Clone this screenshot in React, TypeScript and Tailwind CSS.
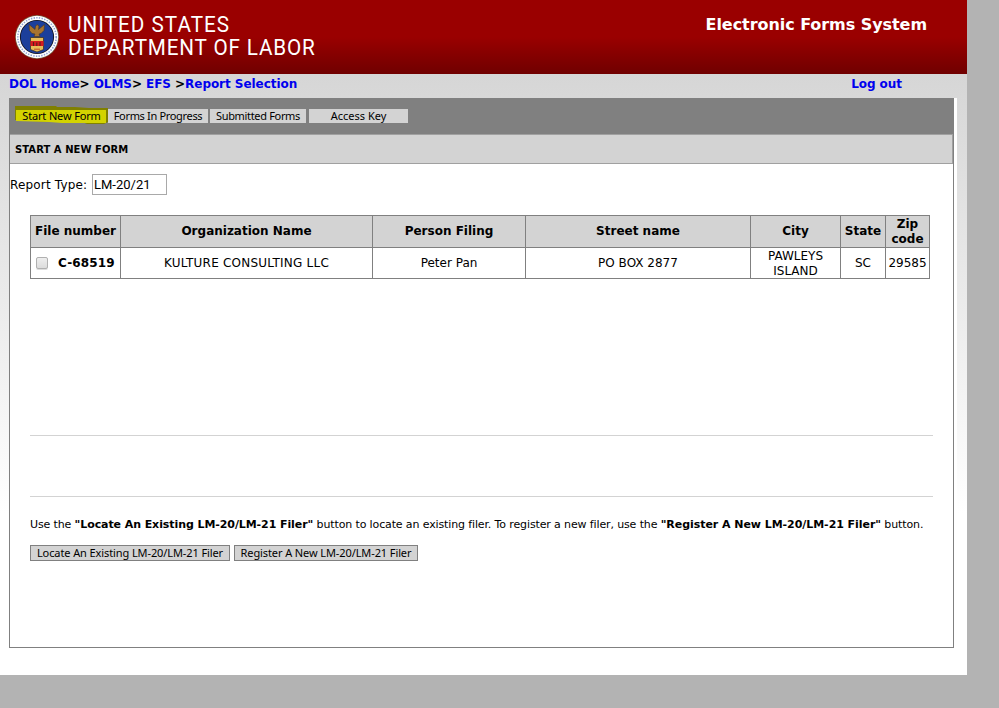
import type { ReactNode } from "react";

const th = "border border-[#808080] bg-[#d3d3d3] p-0 text-center font-bold leading-[15px]";
const td = "border border-[#808080] p-0 text-center leading-[15px]";

function Seal() {
  return (
    <svg width="44" height="44" viewBox="0 0 44 44">
      <circle cx="22" cy="22" r="22" fill="#73583c" />
      <circle cx="22" cy="22" r="21.2" fill="#fff" />
      <circle cx="22" cy="22" r="19.2" fill="none" stroke="#8fa3d2" strokeWidth="1.6" strokeDasharray="1.4 1.3" />
      <circle cx="22" cy="22" r="17.1" fill="#14141f" />
      <circle cx="22" cy="22" r="16.2" fill="#1c3f9b" />
      <path
        d="M14 9.5 L20 14.5 L20.5 11.5 L22 9.5 L24 11 L23.5 14.5 L29.5 9.5 L29 15.5 L26 18.5 L24 19 L25 21.5 L19 21.5 L20 19 L17 18.5 L14.5 15.5Z"
        fill="#a8742f"
        stroke="#4a3520"
        strokeWidth=".6"
      />
      <path d="M15.5 22.5 H28.5 V34.5 L22 37 L15.5 34.5Z" fill="#e8bd58" stroke="#33281c" strokeWidth=".7" />
      <path d="M15.5 26 H28.5 V31 H15.5Z" fill="#d71920" />
      <path d="M18.5 27 v4 M21.8 27.5 v3.5 M25 27 v4" stroke="#572018" strokeWidth="1.1" />
      <path d="M19 34.2 h6" stroke="#c44a27" strokeWidth="1" />
    </svg>
  );
}

function Tab({ children, className }: { children: ReactNode; className: string }) {
  return (
    <button className={`block h-[14px] whitespace-nowrap text-center leading-[14px] ${className}`}>{children}</button>
  );
}

export default function App() {
  return (
    <div className="h-[708px] w-[999px] overflow-hidden bg-[#b3b3b3] font-['DejaVu_Sans',sans-serif] text-black">
      <div className="h-[675px] w-[967px] bg-white">
        <header className="flex h-[74px] justify-between bg-linear-to-b from-[#9a0000] from-50% to-[#700000] pl-[15px] pr-[40px] text-white">
          <div className="flex pt-[15px]">
            <Seal />
            <div className="ml-[9px] -mt-[2px] origin-left scale-x-[0.94] whitespace-nowrap font-['Roboto',sans-serif] text-[22px] leading-[23px]">
              <div className="tracking-[1.1px]">UNITED STATES</div>
              <div className="tracking-[0.9px]">DEPARTMENT OF LABOR</div>
            </div>
          </div>
          <h1 className="whitespace-nowrap pt-[15px] text-[16px] font-bold leading-[20px] tracking-[-0.06px]">
            Electronic Forms System
          </h1>
        </header>
        <div className="h-[601px] bg-linear-to-b from-[#d6d6d6] to-white to-[440px] pl-[9px]">
          <nav className="flex h-[24px] justify-between whitespace-nowrap pr-[65px] text-[12px] font-bold leading-[20px] tracking-[-0.05px] text-[#0000ee]">
            <div>
              DOL Home<span className="text-black">&gt;</span> OLMS<span className="text-black">&gt;</span> EFS{" "}
              <span className="text-black">&gt;</span>Report Selection
            </div>
            <div>Log out</div>
          </nav>
          <div className="w-[948px] bg-white">
            <main className="h-[550px] w-[945px] border border-[#808080] bg-white">
              <div className="flex h-[35px] bg-[#808080] pl-[6px] pt-[10px] font-['Noto_Sans',sans-serif] text-[11px]">
                <div className="relative h-[14px] w-[92px]">
                  <svg className="absolute -left-px -top-[4px]" width="93" height="20">
                    <path d="M0 1H41L42 2H60L74 3H93V17L89 19H72L67 17H35L0 15Z" fill="#808000" />
                    <path d="M1 5H91V18H47L34 17L1 16Z" fill="#d3d300" />
                  </svg>
                  <Tab className="relative w-[91px] tracking-[-0.15px]">Start New Form</Tab>
                </div>
                <Tab className="w-[100px] bg-[#d3d3d3] tracking-[-0.33px]">Forms In Progress</Tab>
                <Tab className="ml-[2px] w-[96px] bg-[#d3d3d3] tracking-[-0.33px]">Submitted Forms</Tab>
                <Tab className="ml-[3px] w-[99px] bg-[#d3d3d3]">Access Key</Tab>
              </div>
              <h2 className="h-[30px] w-[943px] border border-l-0 border-[#a0a0a0] bg-[#d3d3d3] pl-[5px] text-[10px] font-bold leading-[30px] tracking-[0.05px]">
                START A NEW FORM
              </h2>
              <div className="flex h-[51px] items-start pt-[10px]">
                <label className="w-[82px] whitespace-nowrap text-[12px] leading-[22px] tracking-[0.17px]">
                  Report Type:
                </label>
                <div className="h-[21px] w-[75px] border border-[#a9a9a9] pl-px font-['Roboto',sans-serif] text-[13px] leading-[19px]">
                  LM-20/21
                </div>
              </div>
              <table className="ml-[20px] w-[900px] table-fixed border-collapse text-[12px]">
                <colgroup>
                  <col className="w-[90px]" />
                  <col className="w-[252px]" />
                  <col className="w-[153px]" />
                  <col className="w-[225px]" />
                  <col className="w-[90px]" />
                  <col className="w-[45px]" />
                  <col className="w-[44px]" />
                </colgroup>
                <thead>
                  <tr className="h-[32px]">
                    <th className={th}>File number</th>
                    <th className={th}>Organization Name</th>
                    <th className={th}>Person Filing</th>
                    <th className={th}>Street name</th>
                    <th className={th}>City</th>
                    <th className={th}>State</th>
                    <th className={th}>Zip code</th>
                  </tr>
                </thead>
                <tbody>
                  <tr className="h-[31px]">
                    <td className={td}>
                      <div className="flex items-center pl-[5px] font-bold tracking-[0.15px]">
                        <span className="mr-[10px] h-[12px] w-[12px] rounded-[2px] border border-[#b0b0b0] bg-linear-to-b from-[#eeeeee] to-[#dcdcdc] shadow-[0_1px_0_#ddd]" />
                        C-68519
                      </div>
                    </td>
                    <td className={`${td} tracking-[0.22px]`}>KULTURE CONSULTING LLC</td>
                    <td className={td}>Peter Pan</td>
                    <td className={td}>PO BOX 2877</td>
                    <td className={td}>
                      <div className="translate-y-px">PAWLEYS ISLAND</div>
                    </td>
                    <td className={td}>SC</td>
                    <td className={td}>29585</td>
                  </tr>
                </tbody>
              </table>
              <div className="ml-[20px] mt-[156px] h-[62px] w-[903px] border-y border-[#d3d3d3]" />
              <p className="ml-[20px] mt-[20px] whitespace-nowrap text-[11px] leading-[16px] tracking-[-0.127px]">
                Use the <b className="tracking-[-0.08px]">"Locate An Existing LM-20/LM-21 Filer"</b> button to locate an
                existing filer. To register a new filer, use the{" "}
                <b className="tracking-[-0.05px]">"Register A New LM-20/LM-21 Filer"</b> button.
              </p>
              <div className="ml-[20px] mt-[12px] flex gap-[4px] font-['Noto_Sans',sans-serif] text-[11px] tracking-[-0.1px]">
                <button className="h-[16px] w-[200px] whitespace-nowrap border border-[#808080] bg-[#d3d3d3] leading-[14px]">
                  Locate An Existing LM-20/LM-21 Filer
                </button>
                <button className="h-[16px] w-[184px] whitespace-nowrap border border-[#808080] bg-[#d3d3d3] leading-[14px]">
                  Register A New LM-20/LM-21 Filer
                </button>
              </div>
            </main>
          </div>
        </div>
      </div>
    </div>
  );
}
